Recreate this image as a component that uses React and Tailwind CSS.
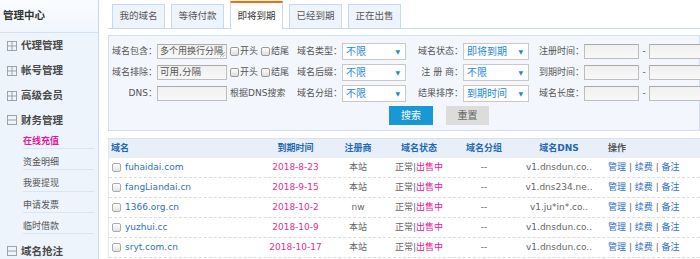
const PlusBox = ({ minus }) => (
  <svg width="10" height="10" viewBox="0 0 10 10" className="shrink-0">
    <rect x="0.5" y="0.5" width="9" height="9" fill="none" stroke="#9aa3ad" />
    <line x1="1" y1="5" x2="9" y2="5" stroke="#9aa3ad" />
    {!minus && <line x1="5" y1="1" x2="5" y2="9" stroke="#9aa3ad" />}
  </svg>
)

function Sidebar() {
  const main = ['代理管理', '帐号管理', '高级会员']
  const subs = ['资金明细', '我要提现', '申请发票', '临时借款']
  return (
    <div className="w-[99px] shrink-0 bg-[#edf4fc] border-r border-[#c7dbf0] h-[259px]">
      <div className="h-[33px] bg-gradient-to-b from-[#fafcff] to-[#f0f6fd] border-b border-[#d3e2f3] flex items-center pl-[3px] text-[10.5px] font-bold text-[#333]">
        管理中心
      </div>
      {main.map(m => (
        <div key={m} className="h-[25px] flex items-center pl-[7px] gap-[4px] text-[10.5px] font-semibold text-[#4a4a4a]">
          <PlusBox />
          <span>{m}</span>
        </div>
      ))}
      <div className="h-[20px] flex items-start pt-[5px] leading-[14px] pl-[7px] gap-[4px] text-[10.5px] font-semibold text-[#4a4a4a]">
        <span className="pt-[2px]"><PlusBox minus /></span>
        <span>财务管理</span>
      </div>
      <div className="ml-[23px] mr-[4px]">
        <div className="h-[21px] pt-[6px] leading-[14px] border-b border-[#d9e5f2] text-[9px] font-bold text-[#e3159b]">在线充值</div>
        {subs.map(s => (
          <div key={s} className="h-[21.3px] pt-[6px] leading-[14px] border-b border-[#d9e5f2] text-[9px] text-[#555]">{s}</div>
        ))}
      </div>
      <div className="pt-[10px] leading-[14px] flex items-start pl-[7px] gap-[4px] text-[10.5px] font-semibold text-[#4a4a4a]">
        <span className="pt-[2px]"><PlusBox minus /></span>
        <span>域名抢注</span>
      </div>
    </div>
  )
}

function Tabs() {
  const tabs = ['我的域名', '等待付款', '即将到期', '已经到期', '正在出售']
  return (
    <div className="h-[29px] border-b border-[#c5daf2] flex items-end gap-[6px] pl-[4px]">
      {tabs.map((t, i) =>
        i === 2 ? (
          <div key={t} className="w-[53px] h-[28px] -mb-[1px] bg-white border border-b-0 border-[#c5daf2] border-t-2 border-t-[#ff6a00] flex items-center justify-center text-[9.5px] text-[#333]">{t}</div>
        ) : (
          <div key={t} className="w-[53px] h-[24px] bg-[#eef4fc] border border-b-0 border-[#c5daf2] flex items-center justify-center text-[9.5px] text-[#555]">{t}</div>
        )
      )}
    </div>
  )
}

const Check = ({ label }) => (
  <span className="flex items-center gap-[1px]">
    <span className="w-[9px] h-[9px] rounded-[2px] border border-[#999] bg-gradient-to-b from-white to-[#dcdcdc]" />
    <span>{label}</span>
  </span>
)

const Sel = ({ value, w }) => (
  <div className={`${w} h-[17px] border border-[#c9c9c9] bg-white flex items-center justify-between pl-[3px] pr-[5px] text-[10px] text-[#1e88d8] shrink-0`}>
    <span>{value}</span>
    <span className="text-[6px]">▼</span>
  </div>
)

const Inp = ({ w, children }) => (
  <div className={`${w} h-[15px] border border-[#bdbdbd] border-t-[#a9a9a9] bg-gradient-to-b from-[#f0f0f0] to-[#f8f8f8] shrink-0 flex items-center pl-[2px] text-[9.5px] text-[#555] overflow-hidden whitespace-nowrap relative`}>
    {children}
  </div>
)

function FilterRow({ l1, first, mid, l2, s2, l3, s3, l4 }) {
  return (
    <div className="h-[21px] flex items-center text-[9px] text-[#555]">
      <div className="w-[48px] text-right shrink-0">{l1}</div>
      {first}
      <div className="w-[64px] shrink-0 flex items-center gap-[3px] pl-[3px]">{mid}</div>
      <div className="w-[51px] shrink-0 text-right">{l2}</div>
      <Sel value={s2} w="w-[64px]" />
      <div className="w-[57px] shrink-0 text-right">{l3}</div>
      <Sel value={s3} w="w-[66px]" />
      <div className="w-[55px] shrink-0 text-right">{l4}</div>
      <Inp w="w-[55px]" />
      <div className="w-[10px] shrink-0 text-center">-</div>
      <Inp w="w-[60px]" />
    </div>
  )
}

function Filter() {
  const checks = (<><Check label="开头" /><Check label="结尾" /></>)
  return (
    <div className="mt-[6px] border border-[#cfe0f4] bg-[#f3f7fd] pt-[5px] pb-[5px]">
      <FilterRow
        l1="域名包含："
        first={
          <Inp w="w-[70px]">
            <span className="self-start leading-[13px] text-[9px]">多个用换行分隔</span>
            <svg width="5" height="5" viewBox="0 0 5 5" className="absolute right-[1px] bottom-[1px]">
              <line x1="0" y1="5" x2="5" y2="0" stroke="#888" strokeWidth="0.7" />
              <line x1="2.5" y1="5" x2="5" y2="2.5" stroke="#888" strokeWidth="0.7" />
            </svg>
          </Inp>
        }
        mid={checks} l2="域名类型：" s2="不限" l3="域名状态：" s3="即将到期" l4="注册时间：" />
      <FilterRow
        l1="域名排除："
        first={<Inp w="w-[70px]">可用,分隔</Inp>}
        mid={checks} l2="域名后缀：" s2="不限" l3="注 册 商：" s3="不限" l4="到期时间：" />
      <FilterRow
        l1="DNS："
        first={<Inp w="w-[70px]" />}
        mid={<span className="whitespace-nowrap">根据DNS搜索</span>} l2="域名分组：" s2="不限" l3="结果排序：" s3="到期时间" l4="域名长度：" />
      <div className="flex mt-[2px] pl-[280px] gap-[13px]">
        <div className="w-[44px] h-[19px] bg-[#1a98d5] text-white text-[10px] flex items-center justify-center">搜索</div>
        <div className="w-[43px] h-[19px] bg-[#dcdcdc] text-[#666] text-[10px] flex items-center justify-center">重置</div>
      </div>
    </div>
  )
}

const rows = [
  ['fuhaidai.com', '2018-8-23', '本站', 'v1.dnsdun.co..'],
  ['fangLiandai.cn', '2018-9-15', '本站', 'v1.dns234.ne..'],
  ['1366.org.cn', '2018-10-2', 'nw', 'v1.ju*in*.co..'],
  ['yuzhui.cc', '2018-10-9', '本站', 'v1.dnsdun.co..'],
  ['sryt.com.cn', '2018-10-17', '本站', 'v1.dnsdun.co..'],
]

function Table() {
  return (
    <div className="mt-[7px] border-l border-[#dde8f5] text-[9px]">
      <div className="h-[20px] bg-[#e8eff9] border-t border-[#d5e3f3] flex items-center font-bold text-[#2368b5]">
        <div className="w-[147px] pl-[2px]">域名</div>
        <div className="w-[79px] text-center">到期时间</div>
        <div className="w-[46px] text-center">注册商</div>
        <div className="w-[76px] text-center">域名状态</div>
        <div className="w-[54px] text-center">域名分组</div>
        <div className="w-[96px] text-center">域名DNS</div>
        <div className="pl-[1px] text-[#555]">操作</div>
      </div>
      {rows.map(r => (
        <div key={r[0]} className="h-[20px] border-b border-dashed border-[#dcdcdc] flex items-center text-[#666] whitespace-nowrap">
          <div className="w-[147px] flex items-center pl-[3px] gap-[4px]">
            <span className="w-[9px] h-[9px] rounded-[2px] border border-[#aaa] bg-gradient-to-b from-white to-[#e2e2e2]" />
            <span className="text-[#2b6fc2]">{r[0]}</span>
          </div>
          <div className="w-[79px] text-center text-[#e0308f]">{r[1]}</div>
          <div className="w-[46px] text-center">{r[2]}</div>
          <div className="w-[76px] text-center">正常|<span className="text-[#e4149a]">出售中</span></div>
          <div className="w-[54px] text-center">--</div>
          <div className="w-[96px] text-center">{r[3]}</div>
          <div className="pl-[1px]">
            <span className="text-[#2b6fc2]">管理</span> | <span className="text-[#2b6fc2]">续费</span> | <span className="text-[#2b6fc2]">备注</span>
          </div>
        </div>
      ))}
    </div>
  )
}

export default function App() {
  return (
    <div className="w-[700px] h-[259px] overflow-hidden bg-white flex font-['DejaVu_Sans','Noto_Sans_CJK_SC',sans-serif]">
      <Sidebar />
      <div className="flex-1 min-w-0 pl-[9px] pt-[0px]">
        <Tabs />
        <Filter />
        <Table />
      </div>
    </div>
  )
}
